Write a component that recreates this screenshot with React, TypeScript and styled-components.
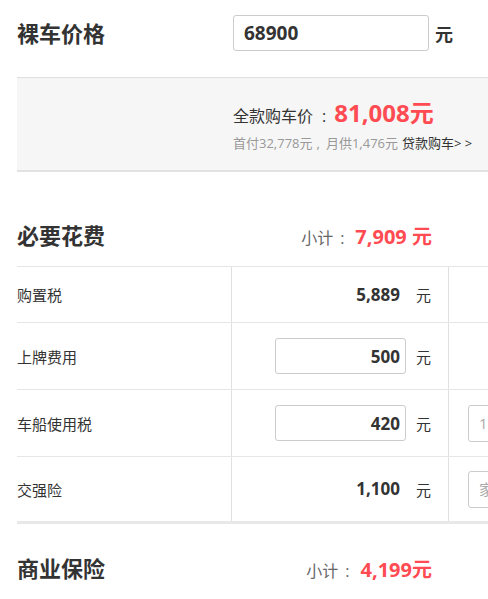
import React from "react";
import styled, { createGlobalStyle } from "styled-components";

const Global = createGlobalStyle`
  html, body { margin: 0; padding: 0; background: #fff; overflow: hidden; }
  body { font-family: "Open Sans", "Noto Sans CJK SC", sans-serif; color: #333; }
  * { box-sizing: border-box; }
`;

const Page = styled.div`
  width: 900px;
  padding-left: 17px;
`;

const TopRow = styled.div`
  display: flex;
  align-items: center;
  padding-top: 15px;
  height: 51px;
`;

const Title = styled.div<{ $w?: number }>`
  width: ${(p) => (p.$w ? `${p.$w}px` : "auto")};
  font-size: 22px;
  font-weight: 700;
  color: #333;
  line-height: 30px;
`;

const PriceInput = styled.input`
  width: 196px;
  height: 36px;
  border: 1px solid #ccc;
  border-radius: 3px;
  padding: 0 10px;
  font-family: "Open Sans", "Noto Sans CJK SC", sans-serif;
  font-size: 19px;
  font-weight: 700;
  color: #333;
  outline: none;
`;

const BigUnit = styled.span`
  margin-left: 6px;
  font-size: 18px;
  font-weight: 700;
  color: #333;
`;

const Summary = styled.div`
  margin-top: 26px;
  background: #f6f6f6;
  border-top: 1px solid #dedede;
  border-bottom: 2px solid #e2e2e2;
  padding: 20px 0 17px 216px;
`;

const TotalLine = styled.div`
  height: 30px;
  line-height: 30px;
  font-size: 16px;
  color: #333;
  white-space: nowrap;
`;

const Colon = styled.span<{ $l: number; $r: number }>`
  margin: 0 ${(p) => p.$r}px 0 ${(p) => p.$l}px;
`;

const Red = styled.span<{ $size: number }>`
  color: #ff4b51;
  font-size: ${(p) => p.$size}px;
  font-weight: 700;
`;

const LoanLine = styled.div`
  margin-top: 6px;
  height: 19px;
  line-height: 19px;
  font-size: 13px;
  color: #999;
  white-space: nowrap;
`;

const Comma = styled.span`
  margin: 0 6px 0 4px;
`;

const LoanLink = styled.span`
  color: #333;
  margin-left: 4px;
`;

const SectionHead = styled.div<{ $top: number }>`
  margin-top: ${(p) => p.$top}px;
  height: 62px;
  display: grid;
  grid-template-columns: 215px 217px;
  align-items: center;
`;

const Subtotal = styled.div`
  display: flex;
  align-items: baseline;
  justify-content: flex-end;
  padding-right: 17px;
  white-space: nowrap;
`;

const SubLabel = styled.span`
  font-size: 16px;
  color: #666;
`;

const Table = styled.div<{ $thick?: boolean }>`
  border-top: 1px solid #e6e6e6;
  border-bottom: ${(p) => (p.$thick ? "3px solid #e8e8e8" : "none")};
`;

const Row = styled.div<{ $h: number; $last?: boolean }>`
  display: grid;
  grid-template-columns: 215px 217px 1fr;
  height: ${(p) => p.$h}px;
  border-bottom: ${(p) => (p.$last ? "none" : "1px solid #e6e6e6")};
`;

const Label = styled.div`
  display: flex;
  align-items: center;
  border-right: 1px solid #e0e0e0;
  font-size: 15px;
  color: #333;
`;

const ValueCell = styled.div`
  display: flex;
  align-items: center;
  justify-content: flex-end;
  padding-right: 17px;
  border-right: 1px solid #e0e0e0;
`;

const Value = styled.div`
  width: 131px;
  height: 36px;
  line-height: 34px;
  padding-right: 5px;
  text-align: right;
  font-size: 17px;
  font-weight: 700;
  color: #333;
  border: 1px solid transparent;
`;

const ValueInput = styled.input`
  width: 131px;
  height: 36px;
  padding: 0 5px;
  text-align: right;
  border: 1px solid #ccc;
  border-radius: 3px;
  font-family: "Open Sans", "Noto Sans CJK SC", sans-serif;
  font-size: 17px;
  font-weight: 700;
  color: #333;
  outline: none;
`;

const Unit = styled.span`
  margin-left: 10px;
  font-size: 15px;
  color: #333;
`;

const ExtraCell = styled.div`
  display: flex;
  align-items: center;
  padding-left: 19px;
`;

const ExtraInput = styled.input`
  width: 160px;
  height: 37px;
  padding: 0 10px;
  border: 1px solid #ccc;
  border-radius: 3px;
  font-family: "Open Sans", "Noto Sans CJK SC", sans-serif;
  font-size: 15px;
  color: #333;
  outline: none;
  &::placeholder { color: #aaa; }
`;

type Fee = {
  name: string;
  value: string;
  editable?: boolean;
  h: number;
  extra?: string;
};

const fees: Fee[] = [
  { name: "购置税", value: "5,889", h: 56 },
  { name: "上牌费用", value: "500", editable: true, h: 67 },
  { name: "车船使用税", value: "420", editable: true, h: 67, extra: "1.6L-2.0L(含)" },
  { name: "交强险", value: "1,100", h: 64, extra: "家用6座以下" },
];

export default function App() {
  return (
    <Page>
      <Global />
      <TopRow>
        <Title $w={216}>裸车价格</Title>
        <PriceInput defaultValue="68900" />
        <BigUnit>元</BigUnit>
      </TopRow>

      <Summary>
        <TotalLine>
          全款购车价<Colon $l={9} $r={8}>:</Colon>
          <Red $size={24}>81,008元</Red>
        </TotalLine>
        <LoanLine>
          首付32,778元<Comma>,</Comma>月供1,476元<LoanLink>贷款购车&gt; &gt;</LoanLink>
        </LoanLine>
      </Summary>

      <SectionHead $top={32}>
        <Title>必要花费</Title>
        <Subtotal>
          <SubLabel>
            小计<Colon $l={7} $r={11}>:</Colon>
          </SubLabel>
          <Red $size={20}>7,909 元</Red>
        </Subtotal>
      </SectionHead>

      <Table $thick>
        {fees.map((f, i) => (
          <Row key={f.name} $h={f.h} $last={i === fees.length - 1}>
            <Label>{f.name}</Label>
            <ValueCell>
              {f.editable ? (
                <ValueInput defaultValue={f.value} />
              ) : (
                <Value>{f.value}</Value>
              )}
              <Unit>元</Unit>
            </ValueCell>
            <ExtraCell>
              {f.extra && <ExtraInput placeholder={f.extra} />}
            </ExtraCell>
          </Row>
        ))}
      </Table>

      <SectionHead $top={13}>
        <Title>商业保险</Title>
        <Subtotal>
          <SubLabel>
            小计<Colon $l={7} $r={11}>:</Colon>
          </SubLabel>
          <Red $size={20}>4,199元</Red>
        </Subtotal>
      </SectionHead>

      <Table />
    </Page>
  );
}
